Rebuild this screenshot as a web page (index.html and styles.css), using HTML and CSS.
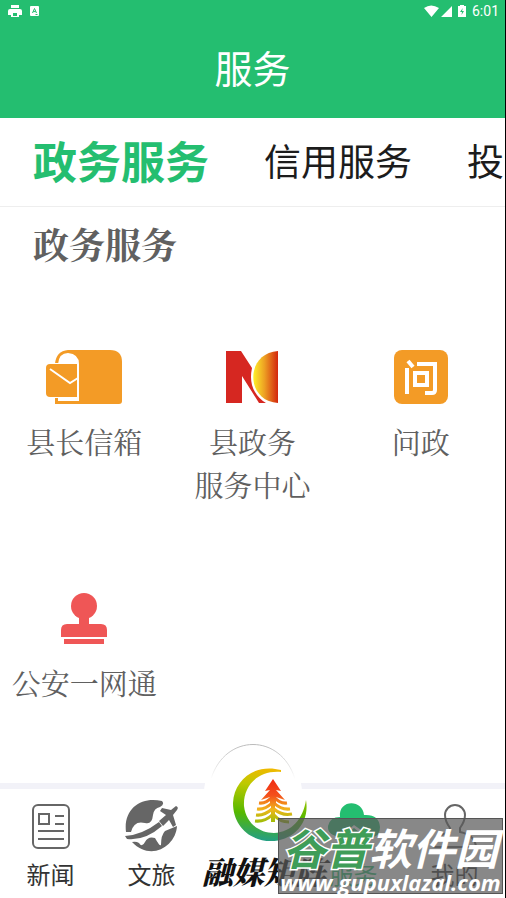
FILE: index.html
```html
<!DOCTYPE html>
<html lang="zh-CN">
<head>
    <meta charset="UTF-8">
    <meta name="viewport" content="width=device-width, initial-scale=1.0">
    <title>服务</title>
    <link rel="stylesheet" href="styles.css">
</head>
<body>
    <div class="app">
        <header class="header">
            <div class="status">
                <svg width="14" height="13" viewBox="0 0 14 13"><path d="M3 0h8v3H3zM2 4h10a2 2 0 0 1 2 2v4h-3v2H3v-2H0V6a2 2 0 0 1 2-2z" fill="#fff"/><path d="M5 8h4v3H5z" fill="#24be70"/></svg>
                <svg width="9" height="10" viewBox="0 0 9 10"><rect width="9" height="10" rx="1" fill="#fff"/><path d="M2.5 7 4.5 2.5 6.5 7M3.2 5.6h2.6M5.5 8.5h2" fill="none" stroke="#24be70"/></svg>
                <span class="status-space"></span>
                <svg width="28" height="12" viewBox="0 0 28 12" fill="#fff"><path d="M0 3q7-5 15 0L7.500 12zM17 12h11V1z"/></svg>
                <svg class="battery" width="8" height="12" viewBox="0 0 8 12"><path d="M2 0h4v1h2v11H0V1h2z" fill="#fff"/><path d="M4.800 3 2 7h2L3.500 10 6 6H4z" fill="#24be70"/></svg>
                <span class="clock">6:01</span>
            </div>
            <h1>服务</h1>
        </header>

        <nav class="tabs">
            <a href="#" class="active">政务服务</a>
            <a href="#">信用服务</a>
            <a href="#">投诉</a>
        </nav>

        <main>
            <h2>政务服务</h2>
            <div class="services">
                <a href="#" class="service">
                    <svg width="76" height="54" viewBox="0 0 76 54">
                        <path d="M22 0h42q12 0 12 12v39q0 3-3 3H9V14Q10 1 22 0z" fill="#f39b26"/>
                        <path d="M12 52V14Q13 3 22 3q11 1 11 11v37H12z" fill="#fff"/>
                        <rect x="-1" y="13" width="33" height="35" rx="5" fill="#fff"/>
                        <path d="M4 14h27v33H4q-4 0-4-4V18q0-4 4-4z" fill="#f39b26"/>
                        <path d="M4 19 24 33l8-5" fill="none" stroke="#fff" stroke-width="2"/>
                    </svg>
                    <span>县长信箱</span>
                </a>
                <a href="#" class="service">
                    <svg width="54" height="54" viewBox="0 0 54 54">
                        <defs>
                            <linearGradient id="sun">
                                <stop offset="0" stop-color="#fff02a"/>
                                <stop offset=".45" stop-color="#eda023"/>
                                <stop offset="1" stop-color="#d3260d"/>
                            </linearGradient>
                        </defs>
                        <path d="M1 1h15l11 17q-3 14 3 24 4 7 11 11h-7L17 26v27H1z" fill="#d62721"/>
                        <path d="M53 1C20 3 20 51 53 53z" fill="url(#sun)"/>
                    </svg>
                    <span>县政务<br>服务中心</span>
                </a>
                <a href="#" class="service">
                    <svg width="54" height="54" viewBox="0 0 54 54">
                        <rect width="54" height="54" rx="8" fill="#f39b26"/>
                        <path d="m14 11 5 6M13 18v26M23 14h18v26q0 3-3 3h-7M21 37V23h12v12H21" fill="none" stroke="#fff" stroke-width="4"/>
                    </svg>
                    <span>问政</span>
                </a>
                <a href="#" class="service">
                    <svg width="46" height="54" viewBox="0 0 46 54" fill="#ef5656">
                        <circle cx="23" cy="15" r="13"/>
                        <path d="M18 25h10v8h12q6 0 6 6v7H0v-7q0-6 6-6h12zM3 48h40v5H3z"/>
                    </svg>
                    <span>公安一网通</span>
                </a>
            </div>
        </main>

        <footer class="tabbar">
            <a href="#" class="tab-item">
                <svg width="38" height="54" viewBox="0 0 38 54" fill="none" stroke="#666" stroke-width="2">
                    <rect x="1" y="6" width="36" height="43" rx="5"/>
                    <path d="M7 15h10v10H7zM23 17h9M23 25h9M6 32h26M6 40h26"/>
                </svg>
                <span>新闻</span>
            </a>
            <a href="#" class="tab-item">
                <svg width="54" height="54" viewBox="0 0 54 54">
                    <path d="M1 33C-2 9 17-3 37 2q3 3-2 6-6 1-7 8-1 10-8 8-11-3-14 9z" fill="#666"/>
                    <path d="M7 43q4-1 7 1 3 5 6-1 3-6 10-4 5 9 6 7 0-10 4-14l12-5C51 47 26 63 7 43z" fill="#666"/>
                    <path d="M0 37q17-1 34-14l3 4Q20 42 2 40z" fill="#666"/>
                    <path d="m34 22 7-6-6-4 2-3 9 2 5-4q3 1 1 4l-4 5 3 10-3 2-4-7-6 6z" fill="#666"/>
                </svg>
                <span>文旅</span>
            </a>
            <a href="#" class="tab-item center">
                <svg class="bump" width="98" height="98" viewBox="0 0 98 98">
                    <defs>
                        <linearGradient id="rim" x1="0" y1="0" x2="0" y2="1">
                            <stop offset="0" stop-color="#bbb"/>
                            <stop offset="1" stop-color="#fff"/>
                        </linearGradient>
                        <linearGradient id="moon" x1=".6" y1="0" x2=".5" y2="1">
                            <stop offset="0" stop-color="#f3b800"/>
                            <stop offset=".25" stop-color="#bdc900"/>
                            <stop offset=".65" stop-color="#55b800"/>
                            <stop offset="1" stop-color="#249f83"/>
                        </linearGradient>
                        <linearGradient id="tree" gradientUnits="userSpaceOnUse" x1="0" y1="11" x2="0" y2="58">
                            <stop offset="0" stop-color="#f02a12"/>
                            <stop offset=".35" stop-color="#f4501c"/>
                            <stop offset=".65" stop-color="#f0b51b"/>
                            <stop offset="1" stop-color="#86bf00"/>
                        </linearGradient>
                    </defs>
                    <circle cx="49" cy="49" r="49" fill="#fff"/>
                    <path d="M7 35C21-11 77-11 91 35" fill="none" stroke="url(#rim)"/>
                </svg>
                <svg class="emblem" width="74" height="74" viewBox="0 0 74 74">
                    <path d="M48 4C24 2 10 19 11 38c2 17 15 27 30 27 18-1 29-14 32-33C77 55 60 73 38 73 16 73 0 57 0 35 1 12 22-5 48 2z" fill="url(#moon)"/>
                    <path d="m40 11 8 12-5-1 9 10-9-3v8h-6v-8l-9 3 9-10-5 1z" fill="url(#tree)"/>
                    <path d="M39 29q-6 7-13 6M41 29q6 7 13 6M39 35q-7 7-15 6M41 35q7 7 16 6M39 41q-8 7-16 6M41 41q8 7 18 5M39 47q-7 7-17 6M41 47q6 7 15 7" fill="none" stroke="url(#tree)" stroke-width="3"/>
                    <path d="M38 26h4v28h-4z" fill="url(#tree)"/>
                </svg>
                <span class="brush">融媒矩阵</span>
            </a>
            <a href="#" class="tab-item current">
                <svg width="54" height="54" viewBox="0 0 54 54" fill="#24be70">
                    <path d="M13 18C11 0 36 0 37 16q15-1 16 12 0 10-9 10L27 26 13 38Q0 36 1 27q2-9 12-9z"/>
                    <path d="m27 29 15 12q-15 12-30 0z"/>
                </svg>
                <span>服务</span>
            </a>
            <a href="#" class="tab-item">
                <svg width="46" height="54" viewBox="0 0 46 54" fill="none" stroke="#666" stroke-width="2">
                    <path d="M18 29Q13 22 13 16a10 10 0 0 1 20 0q0 6-5 13v4q15 3 16 15H2q1-12 16-15z"/>
                </svg>
                <span>我的</span>
            </a>
            <div class="watermark">
                <div class="mark-name"><span>谷普</span>软件园</div>
                <div class="mark-url">www.gupuxlazal.com</div>
            </div>
        </footer>
    </div>
</body>
</html>
```

FILE: styles.css
```css
* {
    box-sizing: border-box;
}
body {
    margin: 0;
    background-color: #fff;
    font-family: "Noto Sans CJK SC", sans-serif;
}
a {
    color: inherit;
    text-decoration: none;
}
svg {
    display: block;
    flex-shrink: 0;
}
.app {
    display: flex;
    flex-direction: column;
    min-height: 100vh;
    border-right: 1px solid #000;
    overflow: hidden;
}
.header {
    background-color: #24be70;
    color: #fff;
}
.status {
    display: flex;
    align-items: center;
    gap: 8px;
    height: 22px;
    padding: 0 6px 0 8px;
    font: 14px/22px Roboto, sans-serif;
}
.status-space {
    flex: 1;
}
.battery {
    margin: 0 -2px;
}
.header h1 {
    margin: 0;
    padding-bottom: 6px;
    font-size: 38px;
    font-weight: 400;
    line-height: 90px;
    text-align: center;
}
.tabs {
    display: flex;
    align-items: center;
    gap: 55px;
    padding: 0 0 4px 33px;
    border-bottom: 1px solid #eee;
    color: #1c1c1c;
    font-size: 37px;
    line-height: 84px;
    white-space: nowrap;
    overflow: hidden;
}
.tabs .active {
    color: #24be70;
    font-size: 44px;
    font-weight: 700;
}
main {
    flex: 1;
    padding-top: 18px;
    color: #606060;
    font-family: "Noto Serif CJK SC", "Noto Serif SC", "Noto Sans CJK SC", serif;
}
main h2 {
    margin: 0 0 88px;
    padding-left: 33px;
    font-size: 36px;
    line-height: 37px;
}
.services {
    display: grid;
    grid-template-columns: repeat(3, 1fr);
    row-gap: 85px;
}
.service {
    display: flex;
    flex-direction: column;
    align-items: center;
    gap: 16px;
    font-size: 29px;
    line-height: 43px;
    text-align: center;
}
.tabbar {
    position: relative;
    display: grid;
    grid-template-columns: repeat(5, minmax(0, 1fr));
    height: 115px;
    padding-top: 10px;
    border-top: 6px solid #f2f2f8;
    background-color: #fff;
    color: #333;
}
.tab-item {
    display: flex;
    flex-direction: column;
    align-items: center;
    gap: 4px;
    font-size: 24px;
    line-height: 34px;
    white-space: nowrap;
}
.current {
    color: #24be70;
}
.center {
    justify-content: flex-end;
    align-items: flex-start;
    padding-bottom: 10px;
}
.bump {
    position: absolute;
    top: -45px;
    left: 50%;
    margin-left: -49px;
}
.emblem {
    position: absolute;
    top: -21px;
    left: 50%;
    margin-left: -20px;
}
.brush {
    position: relative;
    color: #111;
    font-family: "Noto Serif CJK SC", "Noto Sans CJK SC", serif;
    font-size: 31px;
    font-style: italic;
    font-weight: 900;
}
.watermark {
    position: absolute;
    right: 2px;
    bottom: 4px;
    width: 225px;
    height: 76px;
    border: 1px solid #555;
    background-color: rgba(90, 90, 90, 0.72);
    color: #fff;
    font-style: italic;
    font-weight: 700;
    text-align: center;
    white-space: nowrap;
}
.mark-name {
    font-size: 43px;
    line-height: 54px;
}
.mark-name span {
    color: #3f9d58;
    -webkit-text-stroke: 3px #fff;
    paint-order: stroke fill;
}
.mark-url {
    font-family: "Open Sans", sans-serif;
    font-size: 22px;
    line-height: 18px;
}
```
